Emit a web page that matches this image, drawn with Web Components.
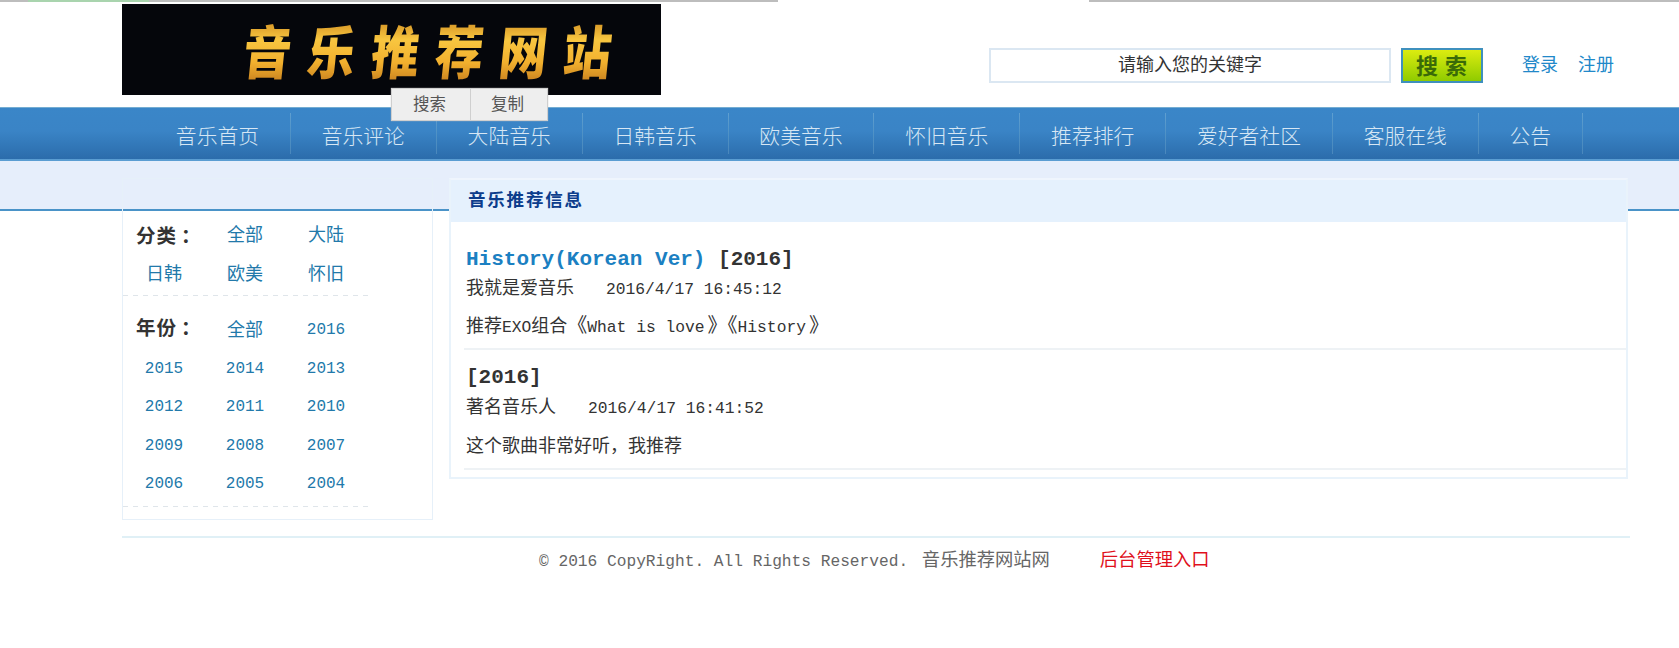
<!DOCTYPE html>
<html lang="zh">
<head>
<meta charset="utf-8">
<title>音乐推荐网站</title>
<style>
html,body{margin:0;padding:0;background:#fff;}
body{width:1679px;height:648px;overflow:hidden;font-family:"Noto Sans CJK SC","Liberation Sans",sans-serif;}
</style>
</head>
<body>
<top-strip></top-strip>
<site-header></site-header>
<site-nav>
  <nav-item>音乐首页</nav-item><nav-item>音乐评论</nav-item><nav-item>大陆音乐</nav-item><nav-item>日韩音乐</nav-item><nav-item>欧美音乐</nav-item><nav-item>怀旧音乐</nav-item><nav-item>推荐排行</nav-item><nav-item>爱好者社区</nav-item><nav-item>客服在线</nav-item><nav-item>公告</nav-item>
</site-nav>
<page-main>
  <filter-panel slot="side">
    <filter-group style="--lab:2px" label="分类" items="全部,大陆,日韩,欧美,怀旧"></filter-group>
    <filter-group style="--lab:8px" label="年份" items="全部,2016,2015,2014,2013,2012,2011,2010,2009,2008,2007,2006,2005,2004"></filter-group>
  </filter-panel>
  <info-panel slot="content" heading="音乐推荐信息">
    <post-item song="History(Korean Ver)" year="[2016]" author="我就是爱音乐" date="2016/4/17 16:45:12">推荐<m-t>EXO</m-t>组合<m-q>《</m-q><m-t>What is love</m-t><m-q close>》</m-q><m-q>《</m-q><m-t>History</m-t><m-q close>》</m-q></post-item>
    <post-item style="--sub-gap:-3px;--body-gap:1px" year="[2016]" author="著名音乐人" date="2016/4/17 16:41:52">这个歌曲非常好听，我推荐</post-item>
  </info-panel>
</page-main>
<site-footer></site-footer>
<script>
function def(name, css, html, init){
  customElements.define(name, class extends HTMLElement{
    constructor(){super();this.attachShadow({mode:'open'});}
    connectedCallback(){
      this.shadowRoot.innerHTML='<style>'+css+'</style>'+(typeof html==='function'?html(this):html);
      if(init)init(this);
    }
  });
}
const MONO='"Liberation Mono","DejaVu Sans Mono",monospace';
const CJK='"Noto Sans CJK SC","Liberation Sans",sans-serif';

def('top-strip',`:host{display:flex;height:2px;background:#fff}
  i{display:block;height:2px;background:#bdbdbd}
  .a{width:28px}.g{width:121px;background:#a9d4ae}.b{width:629px}.w{width:311px;background:#fff}.c{flex:1}`,
  `<i class="a"></i><i class="g"></i><i class="b"></i><i class="w"></i><i class="c"></i>`);

def('site-logo',`:host{display:block;width:539px;height:91px;background:#05060b;overflow:hidden;flex:none}
  .t{display:block;width:max-content;margin:-2px 0 0 122px;font:900 48px/94px ${CJK};letter-spacing:16px;
    background:linear-gradient(180deg,#c9831c 20%,#f8c640 42%,#f2b02e 62%,#b9701a 86%);
    -webkit-background-clip:text;background-clip:text;color:transparent;transform:skewX(-6deg) scaleY(1.2);}`,
  `<span class="t">音乐推荐网站</span>`);

def('search-box',`:host{display:flex;align-items:center;flex:none}
  .i{box-sizing:border-box;width:402px;height:35px;border:2px solid #dbe7f2;background:#fff;color:#333;
    font:18px/27px ${CJK};text-align:center;}
  .b{box-sizing:border-box;margin-left:10px;width:82px;height:35px;border:2px solid #3f90bd;
    background:linear-gradient(180deg,#dcec10,#8fcb00);color:#3a6a08;font:700 22px/28px ${CJK};text-align:center;letter-spacing:1px}
  a{color:#2188c9;font:18px/31px ${CJK};text-decoration:none;align-self:flex-start}
  .l{margin-left:39px}.r{margin-left:20px}`,
  `<div class="i">请输入您的关键字</div><div class="b">搜 索</div><a class="l">登录</a><a class="r">注册</a>`);

def('site-header',`:host{display:flex;position:relative;box-sizing:border-box;height:105px;padding:2px 0 0 122px}
  site-logo{margin-right:328px}
  search-box{align-self:flex-start;margin-top:44px}
  .pop{position:absolute;left:391px;top:86px;display:flex;height:33px;box-sizing:border-box;border:1px solid #cfcfcf;background:#eee;color:#555;font:16.5px/29px ${CJK};z-index:5;box-shadow:0 0 1px #bbb}
  .pop span{display:block;text-align:center;box-sizing:border-box}
  .pop .x{width:79px;padding-right:3px;border-right:1px solid #cfcfcf}.pop .y{width:76px;padding-right:3px}`,
  `<site-logo></site-logo><search-box></search-box><div class="pop"><span class="x">搜索</span><span class="y">复制</span></div>`);

def('site-nav',`:host{display:flex;box-sizing:border-box;height:54px;padding-left:145px;
    border-top:1px solid #74add2;border-bottom:2px solid #5a9dd2;
    background:linear-gradient(180deg,#3a86c8 0%,#3a84c6 45%,#2b6cab 100%)}`,
  `<slot></slot>`);

def('nav-item',`:host{display:block;box-sizing:content-box;padding:0 30.85px;height:100%;margin-right:1px;color:#d7e7f4;font:300 20.8px/54px ${CJK};position:relative}
  :host::after{content:"";position:absolute;right:-1px;top:5px;bottom:5px;width:1px;background:linear-gradient(180deg,#5f9fd0,#4f92c6 50%,#4a87bc)}`,`<slot></slot>`);

def('page-main',`:host{display:flex;align-items:flex-start;box-sizing:border-box;height:375px;padding:17px 0 0 122px;
    background:linear-gradient(180deg,#e6eefb 0,#e6eefb 48px,#4a93c8 48px,#4a93c8 50px,#fff 50px)}
  ::slotted([slot=side]){margin-right:16px}`,
  `<slot name="side"></slot><slot name="content"></slot>`);

def('filter-panel',`:host{display:block;box-sizing:border-box;width:311px;height:342px;padding-top:37px;border:1px solid #e6f0f9}
  ::slotted(filter-group:last-child){margin-top:15px}`,`<slot></slot>`);

def('filter-group',`:host{display:grid;grid-template-columns:repeat(3,81px);grid-auto-rows:38.5px;width:248px;padding-bottom:3px;background:linear-gradient(90deg,#dfe5ea 50%,transparent 50%) left bottom/10px 1px repeat-x}
  .c{display:flex;align-items:center;justify-content:center;box-sizing:border-box;padding:0 0 4px 1px;color:#2279aa;font:18px/1 ${CJK};height:100%}
  .n{font:16px/1 ${MONO};padding-bottom:0}
  .h{justify-content:flex-start;padding-left:13px;padding-bottom:var(--lab,2px);color:#333;font:700 19.5px/1 ${CJK};letter-spacing:1px;white-space:pre}
  .h span{margin-left:4px}`,
  el=>{
    const cells=(el.getAttribute('items')||'').split(',');
    return `<div class="c h">${el.getAttribute('label')}<span>：</span></div>`+cells.map(t=>`<div class="c${/^\d/.test(t)?' n':''}">${t}</div>`).join('');
  });

def('info-panel',`:host{display:block;box-sizing:border-box;width:1179px;height:301px;background:#fff;border:2px solid #e9f3fb;border-top-color:#eff5fd}
  h2{margin:0;height:42px;padding-left:17px;background:#e5f1fd;color:#0c3d8c;font:700 17.5px/37px ${CJK};letter-spacing:1.8px}
  .l{padding:10px 0 0 13px}`,
  el=>`<h2>${el.getAttribute('heading')}</h2><div class="l"><slot></slot></div>`);

def('m-t',`:host{display:inline;font:16.3px/1 ${MONO}}`,`<slot></slot>`);
def('m-q',`:host{display:inline;font:20px/1 ${CJK}}
  :host([close]){padding-left:3px}`,`<slot></slot>`);

def('post-item',`:host{display:block;box-sizing:border-box;padding-top:13px;border-bottom:2px solid #eef2f5;color:#333}
  .t{height:30px;padding-left:2px;font:700 21px/30px ${MONO};white-space:pre}
  .t a{color:#1b80c2}
  .s{height:30px;margin-top:var(--sub-gap,-4px);font:18px/30px ${CJK};padding-left:2px}
  .s b{font:400 16.3px/30px ${MONO};margin-left:32px}
  .b{height:38px;margin-top:calc(4px + var(--body-gap,0px));font:18px/38px ${CJK};padding-left:2px;margin-bottom:5px}`,
  el=>{
    const song=el.getAttribute('song');
    return `<div class="t">${song?`<a>${song}</a> `:''}${el.getAttribute('year')}</div>
    <div class="s">${el.getAttribute('author')}<b>${el.getAttribute('date')}</b></div>
    <div class="b"><slot></slot></div>`;
  });

def('site-footer',`:host{display:block;box-sizing:border-box;width:1508px;margin-left:122px;border-top:2px solid #e0f0f6;padding:6px 0 0 417px;color:#666;font:18.3px/28px ${CJK};white-space:pre}
  .m{font:16.2px/28px ${MONO};margin-right:4px}
  a{color:#e0101c;margin-left:50px}`,
  `<span class="m">© 2016 CopyRight. All Rights Reserved. </span>音乐推荐网站网<a>后台管理入口</a>`);
</script>
</body>
</html>
